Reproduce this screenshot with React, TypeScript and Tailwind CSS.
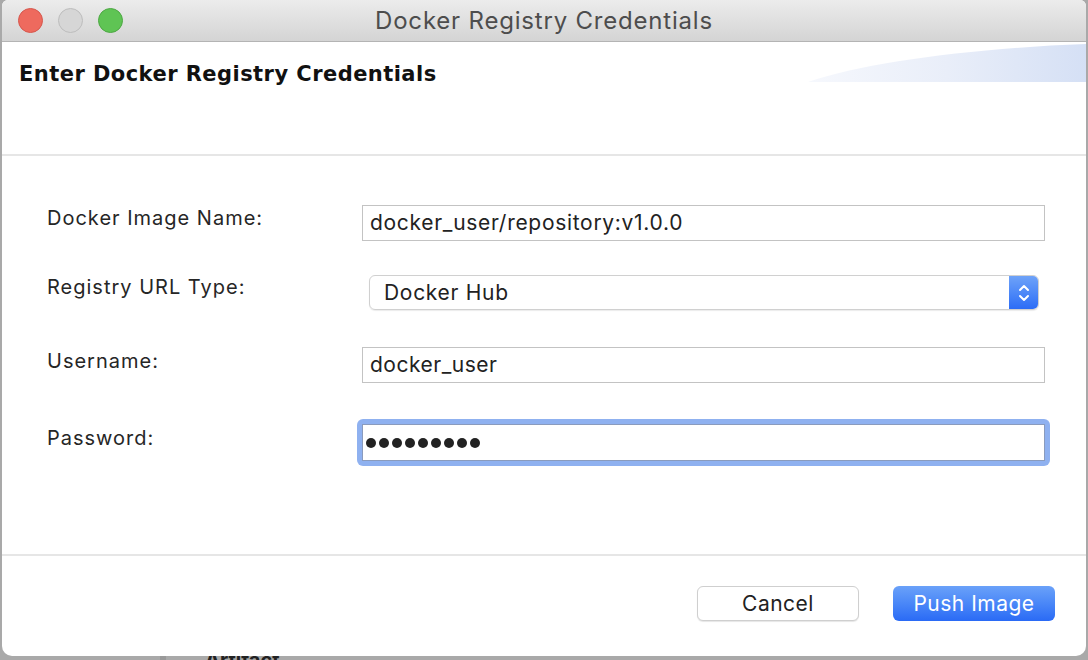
import React from "react";

const sys = { fontFamily: '"Inter", "Liberation Sans", sans-serif' };

function Dots() {
  return (
    <div className="flex items-center gap-[3px]">
      {[0, 1, 2, 3, 4, 5, 6, 7, 8].map((i) => (
        <div key={i} className="w-[10px] h-[10px] rounded-full bg-[#222]" />
      ))}
    </div>
  );
}

export default function App() {
  return (
    <div className="w-[1088px] h-[660px] overflow-hidden bg-[#a9a9a9] relative" style={sys}>
      <div className="absolute left-[205px] top-[645px] text-[20px] font-bold text-[#222]">Artifact</div>
      <div className="absolute left-[160px] top-[656px] w-[6px] h-[4px] bg-[#999]" />
      <div className="relative ml-[2px] w-[1084px] h-[656px] bg-white rounded-b-[10px] rounded-t-[6px] flex flex-col overflow-hidden">
        {/* title bar */}
        <div className="h-[42px] shrink-0 bg-gradient-to-b from-[#ececec] to-[#d4d4d4] border-b border-[#b4b4b4] relative flex items-center">
          <div className="flex items-center gap-[15px] pl-[16px]">
            <div className="w-[25px] h-[25px] rounded-full bg-[#ee6a5e] border border-[#d6574d]" />
            <div className="w-[25px] h-[25px] rounded-full bg-[#d6d6d6] border border-[#bdbdbd]" />
            <div className="w-[25px] h-[25px] rounded-full bg-[#5fc454] border border-[#4da843]" />
          </div>
          <div className="absolute inset-0 flex items-center justify-center text-[24px] tracking-[0.8px] text-[#4d4d4d] pt-[1px]">
            Docker Registry Credentials
          </div>
        </div>
        {/* header */}
        <div className="h-[114px] shrink-0 relative border-b-2 border-[#e6e6e6]">
          <svg className="absolute right-0 top-0" width="290" height="40" viewBox="0 0 290 40">
            <defs>
              <linearGradient id="sw" x1="0" x2="1" y1="0" y2="0">
                <stop offset="0" stopColor="#f6f8fd" />
                <stop offset="0.5" stopColor="#e9eef9" />
                <stop offset="1" stopColor="#d5e0f5" />
              </linearGradient>
            </defs>
            <path d="M12 40 C 70 20, 180 6, 290 2 L 290 40 Z" fill="url(#sw)" />
          </svg>
          <div
            className="absolute left-[17px] top-[17px] text-[21px] tracking-[0.45px] font-bold text-[#111]"
            style={{ fontFamily: '"DejaVu Sans", sans-serif' }}
          >
            Enter Docker Registry Credentials
          </div>
        </div>
        {/* form */}
        <div className="flex-1 flex flex-col pl-[45px] pr-[41px]">
          <div className="flex items-start mt-[49px]">
            <div className="w-[315px] -mt-[2px] text-[20px] leading-[30px] tracking-[1px] text-[#262626]">Docker Image Name:</div>
            <div className="flex-1 h-[36px] border border-[#c3c3c3] flex items-center pl-[7px] text-[21px] tracking-[0.7px] text-[#222]">
              docker_user/repository:v1.0.0
            </div>
          </div>
          <div className="flex items-start mt-[34px]">
            <div className="w-[315px] -mt-[3px] text-[20px] leading-[30px] tracking-[1px] text-[#262626]">Registry URL Type:</div>
            <div className="flex-1 pl-[7px] pr-[6px]">
              <div className="h-[35px] rounded-[6px] border border-[#d0d0d0] shadow-[0_1px_1px_rgba(0,0,0,0.08)] flex items-center overflow-hidden">
                <div className="flex-1 pl-[14px] text-[21px] tracking-[0.7px] text-[#222]">Docker Hub</div>
                <div className="w-[29px] h-full bg-gradient-to-b from-[#6ea2f8] to-[#2c6cf6] flex items-center justify-center">
                  <svg width="12" height="22" viewBox="0 0 12 22" fill="none" stroke="white" strokeWidth="2" strokeLinecap="round" strokeLinejoin="round">
                    <path d="M2 8 L6 4 L10 8" />
                    <path d="M2 14 L6 18 L10 14" />
                  </svg>
                </div>
              </div>
            </div>
          </div>
          <div className="flex items-start mt-[37px]">
            <div className="w-[315px] -mt-[1px] text-[20px] leading-[30px] tracking-[1px] text-[#262626]">Username:</div>
            <div className="flex-1 h-[36px] border border-[#c3c3c3] flex items-center pl-[7px] text-[21px] tracking-[0.5px] text-[#222]">
              docker_user
            </div>
          </div>
          <div className="flex items-start mt-[36px]">
            <div className="w-[315px] mt-[4px] text-[20px] leading-[30px] tracking-[1px] text-[#262626]">Password:</div>
            <div className="flex-1 -ml-[5px] -mr-[5px] p-[5px] rounded-[6px] bg-[#8fb1f0]">
              <div className="h-[37px] bg-white border border-[#8a9bbd] flex items-center pl-[3px]">
                <Dots />
              </div>
            </div>
          </div>
        </div>
        {/* footer */}
        <div className="h-[102px] shrink-0 border-t-2 border-[#e6e6e6] flex justify-end items-start pt-[30px] pr-[31px] gap-[34px]">
          <div className="w-[162px] h-[35px] rounded-[6px] border border-[#cfcfcf] bg-white shadow-[0_1px_1px_rgba(0,0,0,0.1)] flex items-center justify-center text-[21px] tracking-[0.5px] text-[#222]">
            Cancel
          </div>
          <div className="w-[162px] h-[35px] rounded-[6px] bg-gradient-to-b from-[#6aa1f9] to-[#2a6af5] flex items-center justify-center text-[21px] tracking-[0.5px] text-white">
            Push Image
          </div>
        </div>
      </div>
    </div>
  );
}
